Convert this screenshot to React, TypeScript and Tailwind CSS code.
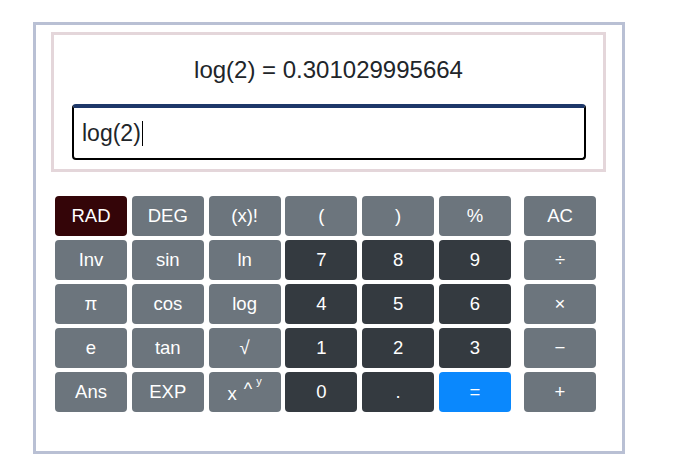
const FN = "bg-[#6c757d]";
const NUM = "bg-[#343a40]";

type Key = { label: React.ReactNode; tone: string };

const keys: Key[] = [
  { label: "RAD", tone: "bg-[#340508]" },
  { label: "DEG", tone: FN },
  { label: "(x)!", tone: FN },
  { label: "(", tone: FN },
  { label: ")", tone: FN },
  { label: "%", tone: FN },
  { label: "Inv", tone: FN },
  { label: "sin", tone: FN },
  { label: "ln", tone: FN },
  { label: "7", tone: NUM },
  { label: "8", tone: NUM },
  { label: "9", tone: NUM },
  { label: "π", tone: FN },
  { label: "cos", tone: FN },
  { label: "log", tone: FN },
  { label: "4", tone: NUM },
  { label: "5", tone: NUM },
  { label: "6", tone: NUM },
  { label: "e", tone: FN },
  { label: "tan", tone: FN },
  { label: "√", tone: FN },
  { label: "1", tone: NUM },
  { label: "2", tone: NUM },
  { label: "3", tone: NUM },
  { label: "Ans", tone: FN },
  { label: "EXP", tone: FN },
  {
    label: (
      <span className="flex items-start">
        <span className="mt-[4px] leading-[20px]">x</span>
        <span className="ml-[7px] text-[18px] leading-none">^</span>
        <span className="ml-[4px] -mt-[4px] text-[11px] leading-none">y</span>
      </span>
    ),
    tone: FN,
  },
  { label: "0", tone: NUM },
  { label: ".", tone: NUM },
  { label: "=", tone: "bg-[#0a88fd]" },
];

const ops = ["AC", "÷", "×", "−", "+"];

function Btn({ label, tone }: Key) {
  return (
    <button
      className={`${tone} flex h-[40px] w-[72px] items-center justify-center rounded-[4px] text-[18.5px] text-white`}
    >
      {label}
    </button>
  );
}

export default function App() {
  return (
    <div className="h-[463px] w-[679px] bg-white pl-[33px] pt-[22px] font-['Liberation_Sans',Arial,sans-serif]">
      <div className="h-[432px] w-[592px] border-[3px] border-[#b9c0d4] px-[15px] pt-[7px]">
        {/* display */}
        <div className="h-[140px] w-[555px] border-[3px] border-[#e4d6da] px-[18px]">
          <div className="pt-[21px] text-center text-[24px] leading-[28px] text-[#212529]">
            log(2) = 0.301029995664
          </div>
          <div className="mt-[20px] flex h-[56px] w-[514px] items-center rounded-[4px] border-2 border-t-[4px] border-black border-t-[#1d3769] pl-[8px] text-[23px] text-[#212529]">
            log(2)
            <span className="ml-px h-[25px] w-px bg-black" />
          </div>
        </div>

        {/* keypad */}
        <div className="ml-[4px] mt-[24px] flex gap-[13px]">
          <div className="grid grid-cols-[repeat(6,72px)] gap-x-[4.8px] gap-y-[4px]">
            {keys.map((k, i) => (
              <Btn key={i} {...k} />
            ))}
          </div>
          <div className="flex flex-col gap-[4px]">
            {ops.map((o) => (
              <Btn key={o} label={o} tone={FN} />
            ))}
          </div>
        </div>
      </div>
    </div>
  );
}
